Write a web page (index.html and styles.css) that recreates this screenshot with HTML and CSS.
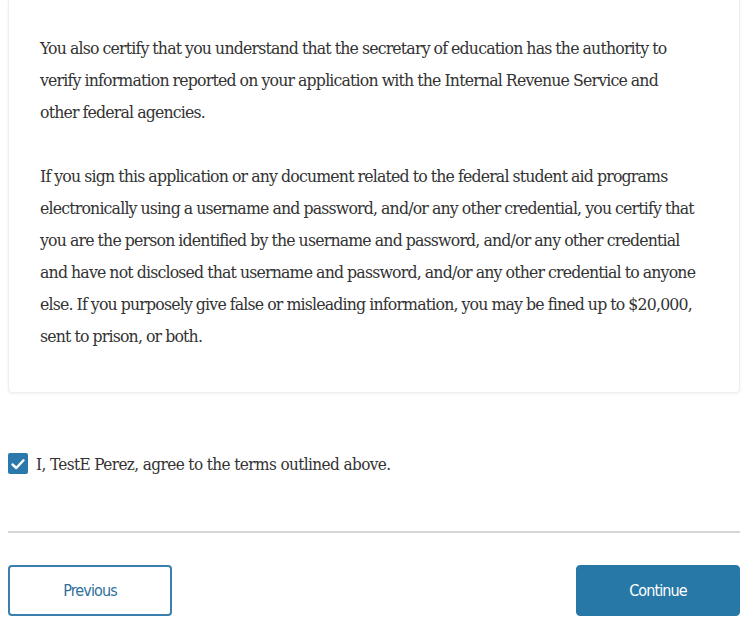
FILE: index.html
```html
<!DOCTYPE html>
<html lang="en">
<head>
<meta charset="utf-8">
<title>Certification</title>
<link rel="stylesheet" href="styles.css">
</head>
<body>
<main class="page">
  <section class="card">
    <p class="para">You also certify that you understand that the secretary of education has the authority to<br>verify information reported on your application with the Internal Revenue Service and<br>other federal agencies.</p>
    <p class="para">If you sign this application or any document related to the federal student aid programs<br>electronically using a username and password, and/or any other credential, you certify that<br>you are the person identified by the username and password, and/or any other credential<br>and have not disclosed that username and password, and/or any other credential to anyone<br>else. If you purposely give false or misleading information, you may be fined up to $20,000,<br>sent to prison, or both.</p>
  </section>
  <label class="agree">
    <span class="box"><svg viewBox="0 0 20 20" width="20" height="20"><path d="M4.5 10.5 L8.3 14 L15.5 6.3" fill="none" stroke="#fff" stroke-width="2.4" stroke-linecap="round" stroke-linejoin="round"/></svg></span>
    <span class="agree-text">I, TestE Perez, agree to the terms outlined above.</span>
  </label>
  <hr class="rule">
  <div class="actions">
    <button class="btn btn-outline" type="button">Previous</button>
    <button class="btn btn-solid" type="button">Continue</button>
  </div>
</main>
</body>
</html>
```
FILE: styles.css
```css
* { box-sizing: border-box; }
html, body { margin: 0; background: #ffffff; }
.page {
  padding: 0 10px 0 8px;
  font-family: "DejaVu Serif Condensed", "DejaVu Serif", serif;
  font-stretch: condensed;
  color: #333333;
}
.card {
  margin-top: -4px;
  padding: 35px 20px 40px 31px;
  background: #ffffff;
  border: 1px solid #eeeeee;
  border-radius: 4px;
  box-shadow: 0 1px 3px rgba(0,0,0,0.06);
}
.para {
  margin: 0;
  font-size: 17.5px;
  line-height: 32px;
  letter-spacing: -0.82px;
  word-spacing: -0.3px;
  white-space: nowrap;
}
.para + .para { margin-top: 32px; }
.agree {
  display: flex;
  align-items: center;
  gap: 8px;
  margin-top: 60px;
  font-size: 17px;
  letter-spacing: -0.6px;
}
.box {
  width: 20px;
  height: 21px;
  background: #2a79ad;
  border-radius: 2px;
  display: flex;
  align-items: center;
  justify-content: center;
}
.rule {
  margin: 57px 0 0;
  border: 0;
  border-top: 2px solid #d6d6d6;
}
.actions {
  display: flex;
  justify-content: space-between;
  margin-top: 32px;
}
.btn {
  width: 164px;
  height: 51px;
  border-radius: 4px;
  font-family: "DejaVu Sans Condensed", "DejaVu Sans", sans-serif;
  font-stretch: condensed;
  font-size: 16px;
  letter-spacing: -0.9px;
}
.btn-outline {
  background: #ffffff;
  border: 2px solid #3a7fae;
  color: #2f6f9c;
}
.btn-solid {
  background: #2778a6;
  border: 1px solid #2778a6;
  color: #ffffff;
}
```
